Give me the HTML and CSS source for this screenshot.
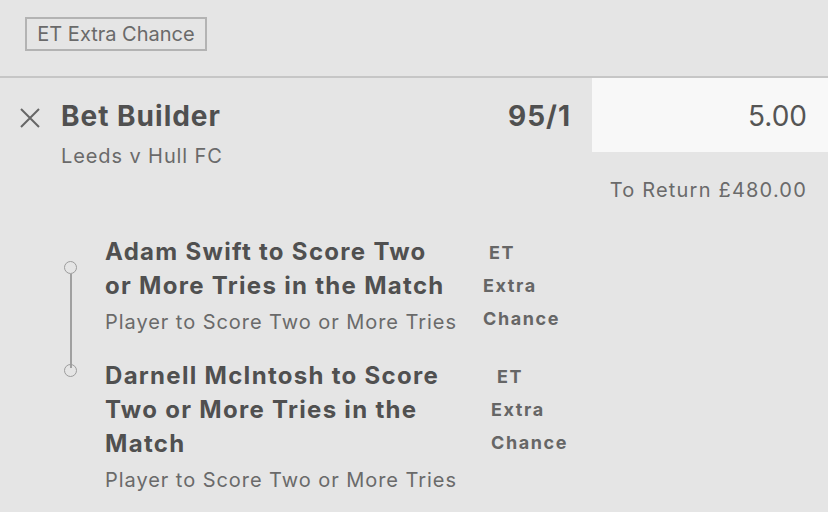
FILE: index.html
```html
<!DOCTYPE html>
<html lang="en">
<head>
<meta charset="utf-8">
<title>Bet Builder</title>
<link rel="stylesheet" href="styles.css">
</head>
<body>
<div class="slip">
  <div class="top">
    <span class="badge">ET Extra Chance</span>
  </div>
  <div class="bet-head">
    <div class="close" aria-label="Remove">
      <svg width="20" height="20" viewBox="0 0 20 20"><path d="M1 1 L19 19 M19 1 L1 19" stroke="#666" stroke-width="2" fill="none"/></svg>
    </div>
    <div class="bet-info">
      <div class="bet-title">Bet Builder</div>
      <div class="bet-event">Leeds v Hull FC</div>
    </div>
    <div class="odds">95/1</div>
    <div class="stake">5.00</div>
  </div>
  <div class="return">To Return £480.00</div>
  <div class="legs">
    <div class="leg leg--first">
      <div class="marker"><span class="dot"></span></div>
      <div class="leg-text">
        <div class="leg-title">Adam Swift to Score Two<br>or More Tries in the Match</div>
        <div class="leg-market">Player to Score Two or More Tries</div>
      </div>
      <div class="leg-tag"><span class="tag-et">ET</span><span>Extra</span><span>Chance</span></div>
    </div>
    <div class="leg leg--second">
      <div class="marker"><span class="dot"></span></div>
      <div class="leg-text">
        <div class="leg-title">Darnell McIntosh to Score<br>Two or More Tries in the<br>Match</div>
        <div class="leg-market">Player to Score Two or More Tries</div>
      </div>
      <div class="leg-tag"><span class="tag-et">ET</span><span>Extra</span><span>Chance</span></div>
    </div>
  </div>
</div>
</body>
</html>
```

FILE: styles.css
```css
html, body {
  margin: 0;
  padding: 0;
  background: #e5e5e5;
}
body {
  font-family: Inter, "Noto Sans", "Liberation Sans", sans-serif;
  color: #555;
  width: 828px;
  height: 512px;
  overflow: hidden;
}
.slip {
  width: 828px;
}
.top {
  height: 78px;
  box-sizing: border-box;
  padding: 17px 0 0 25px;
  border-bottom: 2px solid #c6c6c6;
}
.badge {
  display: inline-block;
  box-sizing: border-box;
  height: 34px;
  width: 182px;
  border: 2px solid #b3b3b3;
  font-size: 20px;
  line-height: 30px;
  color: #6a6a6a;
  text-align: center;
}
.bet-head {
  display: flex;
  align-items: flex-start;
  height: 74px;
}
.close {
  width: 20px;
  height: 20px;
  margin: 30px 21px 0 20px;
  display: flex;
}
.bet-info {
  flex: 1;
  padding-top: 21px;
  white-space: nowrap;
}
.bet-title {
  font-size: 28px;
  line-height: 34px;
  font-weight: 700;
  letter-spacing: 1px;
  color: #505050;
}
.bet-event {
  margin-top: 11px;
  font-size: 20px;
  line-height: 24px;
  letter-spacing: 0.9px;
  color: #6a6a6a;
}
.odds {
  padding-top: 21px;
  margin-right: 21px;
  font-size: 28px;
  line-height: 34px;
  font-weight: 700;
  letter-spacing: 1px;
  color: #505050;
}
.stake {
  width: 236px;
  height: 74px;
  box-sizing: border-box;
  padding-right: 21px;
  background: #f8f8f8;
  font-size: 28px;
  line-height: 76px;
  text-align: right;
  color: #555;
}
.return {
  padding: 26px 21px 0 0;
  text-align: right;
  font-size: 20px;
  line-height: 24px;
  letter-spacing: 1.2px;
  color: #6a6a6a;
}
.legs {
  padding-top: 33px;
  padding-left: 61px;
}
.leg {
  display: flex;
  align-items: flex-start;
}
.leg--second {
  margin-top: 24px;
}
.marker {
  width: 44px;
  position: relative;
}
.dot {
  display: block;
  box-sizing: border-box;
  width: 13px;
  height: 13px;
  border: 1.5px solid #9c9c9c;
  border-radius: 50%;
  margin-left: 3px;
  position: relative;
}
.leg--first .dot {
  margin-top: 26px;
}
.leg--second .dot {
  margin-top: 5px;
}
.leg--first .dot::after {
  content: "";
  position: absolute;
  left: 4.5px;
  top: 11.5px;
  width: 2px;
  height: 94px;
  background: #a0a0a0;
}
.leg-text {
  width: 352px;
  white-space: nowrap;
}
.leg-title {
  font-size: 24px;
  line-height: 34px;
  font-weight: 700;
  letter-spacing: 1.3px;
  color: #505050;
}
.leg-market {
  margin-top: 7px;
  font-size: 20px;
  line-height: 24px;
  letter-spacing: 0.95px;
  color: #6a6a6a;
}
.leg-tag {
  display: flex;
  flex-direction: column;
  font-size: 18px;
  line-height: 33px;
  font-weight: 700;
  color: #666;
  letter-spacing: 1.6px;
  padding-top: 1px;
}
.leg--first .leg-tag {
  margin-left: 26px;
}
.leg--second .leg-tag {
  margin-left: 34px;
}
.tag-et {
  padding-left: 6px;
}
```
